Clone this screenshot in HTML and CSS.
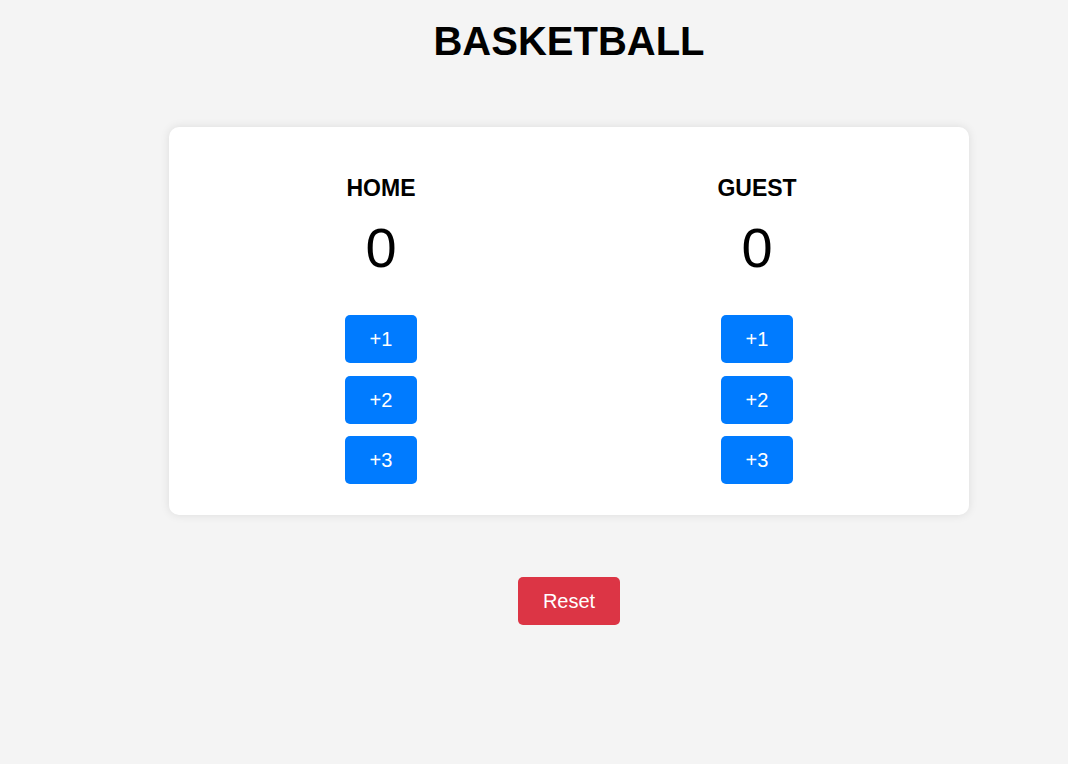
FILE: index.html
```html
<!DOCTYPE html>
<html lang="en">
<head>
<meta charset="utf-8">
<title>Basketball Scoreboard</title>
<link rel="stylesheet" href="styles.css">
</head>
<body>
  <main class="page">
    <h1 class="title">BASKETBALL</h1>
    <section class="board">
      <div class="team">
        <h2 class="team-name">HOME</h2>
        <div class="score">0</div>
        <div class="actions">
          <button class="btn btn-add">+1</button>
          <button class="btn btn-add">+2</button>
          <button class="btn btn-add">+3</button>
        </div>
      </div>
      <div class="team">
        <h2 class="team-name">GUEST</h2>
        <div class="score">0</div>
        <div class="actions">
          <button class="btn btn-add">+1</button>
          <button class="btn btn-add">+2</button>
          <button class="btn btn-add">+3</button>
        </div>
      </div>
    </section>
    <button class="btn btn-reset">Reset</button>
  </main>
</body>
</html>
```

FILE: styles.css
```css
html, body {
  margin: 0;
  padding: 0;
  background: #f4f4f4;
}
body {
  font-family: "Liberation Sans", Arial, sans-serif;
  color: #000;
  min-height: 764px;
}
.page {
  padding-left: 70px;
  display: flex;
  flex-direction: column;
  align-items: center;
}
.title {
  font-size: 40px;
  font-weight: bold;
  margin: 19px 0 63px;
  line-height: normal;
}
.board {
  width: 800px;
  box-sizing: border-box;
  background: #fff;
  border-radius: 10px;
  box-shadow: 0 0 10px rgba(0, 0, 0, 0.1);
  padding: 24px 24px 31px;
  display: flex;
}
.team {
  flex: 1;
  display: flex;
  flex-direction: column;
  align-items: center;
}
.team-name {
  font-size: 23px;
  font-weight: bold;
  margin: 24px 0 13px;
  line-height: normal;
}
.score {
  font-size: 56px;
  line-height: normal;
  margin-bottom: 35px;
}
.actions {
  display: flex;
  flex-direction: column;
  gap: 12.5px;
}
.btn {
  font-family: "Liberation Sans", Arial, sans-serif;
  font-size: 20px;
  line-height: 24px;
  color: #fff;
  border: none;
  border-radius: 5px;
  padding: 12px 25px;
  cursor: pointer;
}
.btn-add {
  background: #007bff;
}
.btn-reset {
  background: #dc3545;
  margin-top: 62px;
}
```
